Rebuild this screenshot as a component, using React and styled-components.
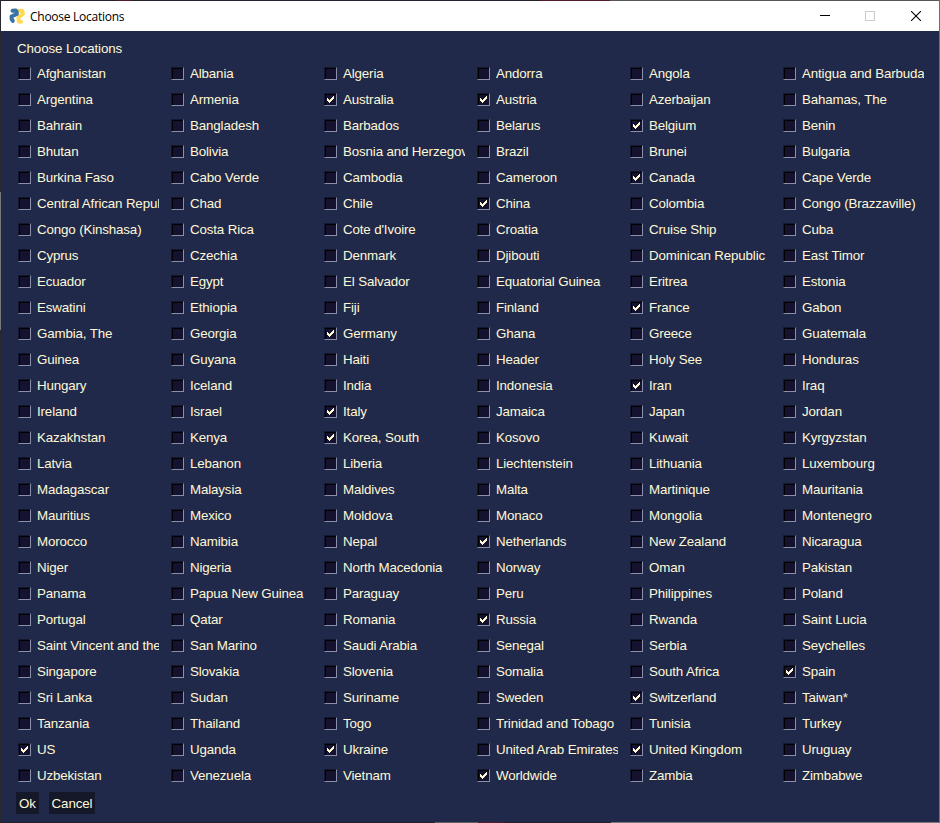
import React, { useState } from "react";
import styled, { createGlobalStyle } from "styled-components";

const GlobalStyle = createGlobalStyle`
  * { box-sizing: border-box; }
  body { margin: 0; background: #21294b; overflow: hidden; }
`;

const Window = styled.div`
  width: 940px;
  height: 823px;
  display: flex;
  flex-direction: column;
  padding: 1px;
  background:
    linear-gradient(#29272f 192px, #77787a 192px 330px, #29272f 330px) left / 1px 100% no-repeat,
    linear-gradient(#6e6e72, #6e6e72) right / 1px 100% no-repeat,
    linear-gradient(90deg, #25222d 117px, #541c28 117px 131px, #25222d 131px 540px, #541c28 540px 610px, #55555b 610px) top / 100% 1px no-repeat,
    linear-gradient(90deg, #25222d 435px, #5f6060 435px 478px, #541c28 478px 503px, #25222d 503px 611px, #77787a 611px) bottom / 100% 1px no-repeat,
    #21294b;
`;

const TitleBar = styled.header`
  height: 30px;
  flex: none;
  display: flex;
  align-items: center;
  padding-left: 7px;
  background: #fff;
  color: #000;
  font: 12px "Open Sans", "Noto Sans", sans-serif;
`;

const Title = styled.span`
  flex: 1;
  padding-left: 4px;
  letter-spacing: -0.26px;
  white-space: nowrap;
`;

const WindowControl = styled.button`
  width: ${(p) => p.$width || 46}px;
  height: 30px;
  padding: 0;
  border: 0;
  display: grid;
  place-items: center;
  background: transparent;
  color: ${(p) => (p.disabled ? "#ccc" : "#000")};
`;

const Content = styled.main`
  flex: 1;
  padding: 9px 0 0 15px;
  color: #fff8d6;
  font: 13.33px/17px "Liberation Sans", Arial, sans-serif;
  letter-spacing: -0.14px;
`;

const Heading = styled.div`
  height: 20px;
  padding-left: 1px;
  letter-spacing: -0.1px;
`;

const Grid = styled.div`
  display: grid;
  grid-template-columns: repeat(6, 153px);
  grid-auto-rows: 26px;
`;

const Option = styled.label`
  display: flex;
  align-items: center;
  width: 141px;
  margin-left: 2px;
`;

const Box = styled.span`
  flex: none;
  width: 13px;
  height: 13px;
  padding: 1px;
  border: 1px solid;
  border-color: #14172e #8b90aa #8b90aa #14172e;
  background: #14122e;
  box-shadow: inset 1px 1px #000;
`;

const Check = styled.svg`
  display: block;
  margin: 1px;
`;

const HiddenInput = styled.input`
  appearance: none;
  width: 0;
  height: 0;
  margin: 0;
`;

const Label = styled.span`
  flex: 1;
  min-width: 0;
  margin-left: 6px;
  overflow: hidden;
  white-space: nowrap;
`;

const Actions = styled.footer`
  display: flex;
  gap: 10px;
  margin-top: 4px;
`;

const ActionButton = styled.button`
  width: ${(p) => p.$width}px;
  height: 22px;
  padding: 0;
  border: 0;
  background: #151829;
  color: inherit;
  font: inherit;
  letter-spacing: -0.1px;
`;

const LOCATIONS = [
  "Afghanistan", "Albania", "Algeria", "Andorra", "Angola", "Antigua and Barbuda",
  "Argentina", "Armenia", "Australia", "Austria", "Azerbaijan", "Bahamas, The",
  "Bahrain", "Bangladesh", "Barbados", "Belarus", "Belgium", "Benin",
  "Bhutan", "Bolivia", "Bosnia and Herzegovina", "Brazil", "Brunei", "Bulgaria",
  "Burkina Faso", "Cabo Verde", "Cambodia", "Cameroon", "Canada", "Cape Verde",
  "Central African Republic", "Chad", "Chile", "China", "Colombia", "Congo (Brazzaville)",
  "Congo (Kinshasa)", "Costa Rica", "Cote d'Ivoire", "Croatia", "Cruise Ship", "Cuba",
  "Cyprus", "Czechia", "Denmark", "Djibouti", "Dominican Republic", "East Timor",
  "Ecuador", "Egypt", "El Salvador", "Equatorial Guinea", "Eritrea", "Estonia",
  "Eswatini", "Ethiopia", "Fiji", "Finland", "France", "Gabon",
  "Gambia, The", "Georgia", "Germany", "Ghana", "Greece", "Guatemala",
  "Guinea", "Guyana", "Haiti", "Header", "Holy See", "Honduras",
  "Hungary", "Iceland", "India", "Indonesia", "Iran", "Iraq",
  "Ireland", "Israel", "Italy", "Jamaica", "Japan", "Jordan",
  "Kazakhstan", "Kenya", "Korea, South", "Kosovo", "Kuwait", "Kyrgyzstan",
  "Latvia", "Lebanon", "Liberia", "Liechtenstein", "Lithuania", "Luxembourg",
  "Madagascar", "Malaysia", "Maldives", "Malta", "Martinique", "Mauritania",
  "Mauritius", "Mexico", "Moldova", "Monaco", "Mongolia", "Montenegro",
  "Morocco", "Namibia", "Nepal", "Netherlands", "New Zealand", "Nicaragua",
  "Niger", "Nigeria", "North Macedonia", "Norway", "Oman", "Pakistan",
  "Panama", "Papua New Guinea", "Paraguay", "Peru", "Philippines", "Poland",
  "Portugal", "Qatar", "Romania", "Russia", "Rwanda", "Saint Lucia",
  "Saint Vincent and the Grenadines", "San Marino", "Saudi Arabia", "Senegal", "Serbia", "Seychelles",
  "Singapore", "Slovakia", "Slovenia", "Somalia", "South Africa", "Spain",
  "Sri Lanka", "Sudan", "Suriname", "Sweden", "Switzerland", "Taiwan*",
  "Tanzania", "Thailand", "Togo", "Trinidad and Tobago", "Tunisia", "Turkey",
  "US", "Uganda", "Ukraine", "United Arab Emirates", "United Kingdom", "Uruguay",
  "Uzbekistan", "Venezuela", "Vietnam", "Worldwide", "Zambia", "Zimbabwe",
];

const INITIAL = [
  "Australia", "Austria", "Belgium", "Canada", "China", "France", "Germany", "Iran",
  "Italy", "Korea, South", "Netherlands", "Russia", "Spain", "Switzerland", "US",
  "Ukraine", "United Kingdom", "Worldwide",
];

function PythonLogo() {
  return (
    <svg width="18" height="18" viewBox="0 0 18 18" fill="none" strokeLinecap="round" strokeLinejoin="round" strokeWidth="4">
      <path d="M11.500 3.700 13.500 3.700Q15 4 14.800 7L10.500 10.500 10.800 14.600 13 14.800" stroke="#ffd94f" />
      <path d="M4.500 3.800 7.500 3.500Q9 4 8.800 7L3.500 9.500 3.800 12.500 4.800 13.800" stroke="#3873a3" />
    </svg>
  );
}

function Country({ name, checked, onToggle }) {
  return (
    <Option>
      <HiddenInput type="checkbox" checked={checked} onChange={onToggle} />
      <Box>
        {checked && (
          <Check width="7" height="7" viewBox="0 0 7 7" shapeRendering="crispEdges">
            <path d="M6 0h1v3H6v1H5v1H4v1H3v1H2V6H1V5H0V2h1v1h1v1h1V3h1V2h1V1h1Z" fill="#fff8d6" />
          </Check>
        )}
      </Box>
      <Label>{name}</Label>
    </Option>
  );
}

export default function App() {
  const [selected, setSelected] = useState(() => new Set(INITIAL));
  const toggle = (name) =>
    setSelected((prev) => {
      const next = new Set(prev);
      if (!next.delete(name)) next.add(name);
      return next;
    });

  return (
    <>
      <GlobalStyle />
      <Window>
        <TitleBar>
          <PythonLogo />
          <Title>Choose Locations</Title>
          <WindowControl aria-label="Minimize" $width={44}>
            <svg width="10" height="10" shapeRendering="crispEdges"><path d="M0 4.500h10" stroke="currentColor" /></svg>
          </WindowControl>
          <WindowControl aria-label="Maximize" disabled>
            <svg width="10" height="10" shapeRendering="crispEdges"><path d="M.5.5h9v9h-9Z" fill="none" stroke="currentColor" /></svg>
          </WindowControl>
          <WindowControl aria-label="Close">
            <svg width="10" height="10"><path d="m0 0 10 10M10 0 0 10" stroke="currentColor" strokeWidth="1.100" /></svg>
          </WindowControl>
        </TitleBar>
        <Content>
          <Heading>Choose Locations</Heading>
          <Grid>
            {LOCATIONS.map((name) => (
              <Country key={name} name={name} checked={selected.has(name)} onToggle={() => toggle(name)} />
            ))}
          </Grid>
          <Actions>
            <ActionButton $width={23}>Ok</ActionButton>
            <ActionButton $width={46}>Cancel</ActionButton>
          </Actions>
        </Content>
      </Window>
    </>
  );
}
